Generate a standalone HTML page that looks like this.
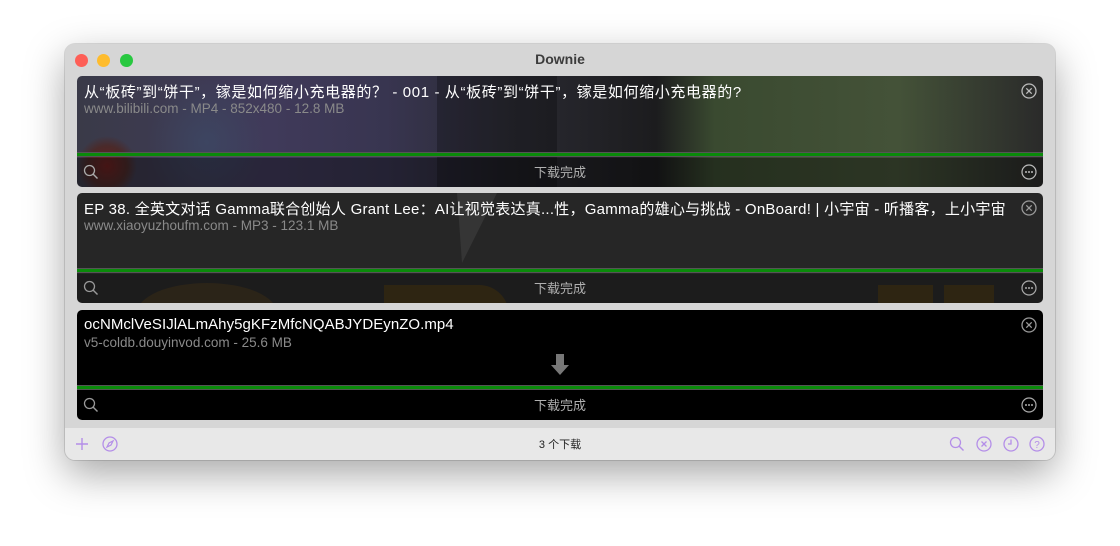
<!DOCTYPE html>
<html><head><meta charset="utf-8"><style>
*{margin:0;padding:0;box-sizing:border-box}
body{width:1120px;height:546px;background:#fff;font-family:"Liberation Sans","Noto Sans CJK SC",sans-serif;position:relative;overflow:hidden}
.win{position:absolute;left:65px;top:44px;width:990px;height:416px;background:#d6d6d6;border-radius:10px;box-shadow:0 14px 40px rgba(0,0,0,.35),0 0 0 1px rgba(0,0,0,.12);overflow:hidden}
.title{position:absolute;top:7px;left:0;right:0;text-align:center;font-weight:bold;font-size:14px;color:#3c3c3c}
.tl{position:absolute;top:10px;width:13px;height:13px;border-radius:50%}
.card{position:absolute;left:12px;width:966px;border-radius:5px;overflow:hidden;color:#fff}
.t1{position:absolute;left:7px;top:5px;font-size:15px;white-space:nowrap}
.t2{position:absolute;left:7px;top:25px;font-size:13.5px;color:#8a8a8a;white-space:nowrap}
.bar{position:absolute;left:0;right:0;height:5px;background:#0a8a0a;border-top:1px solid #555;border-bottom:1px solid #555}
.bot{position:absolute;left:0;right:0;height:29px;text-align:center;font-size:13px;color:#b0b0b0;line-height:29px}
.x{position:absolute;right:6px;top:7px}
.s{position:absolute;left:6px;top:6px}
.m{position:absolute;right:6px;top:6px}
.foot{position:absolute;left:0;right:0;top:384px;height:32px;background:#e8e8e8}
</style></head><body>
<div class="win">
<div class="tl" style="left:10px;background:#fe5f57"></div>
<div class="tl" style="left:32px;background:#febc2e"></div>
<div class="tl" style="left:55px;background:#28c840"></div>
<div class="title">Downie</div>

<div class="card" style="top:32px;height:111px;background:linear-gradient(90deg,#3a3a48 0%,#403a5a 20%,#383550 32%,#2a2a32 45%,#1c1c1e 60%,#3a4a30 66%,#445238 85%,#2a2a2a 100%)">
<div style="position:absolute;left:0;top:60px;width:60px;height:51px;background:radial-gradient(circle at 30px 30px,#6a2020 0,#4a2a2a 20px,transparent 30px)"></div>
<div style="position:absolute;left:70px;top:0;width:120px;height:111px;background:radial-gradient(ellipse at 50% 60%,rgba(60,80,110,.5),transparent 70%)"></div>
<div style="position:absolute;left:360px;top:0;width:120px;height:111px;background:rgba(0,0,0,.25)"></div>
<div class="t1" style="letter-spacing:.62px">从“板砖”到“饼干”，镓是如何缩小充电器的？ - 001 - 从“板砖”到“饼干”，镓是如何缩小充电器的?</div>
<div class="t2">www.bilibili.com - MP4 - 852x480 - 12.8 MB</div>
<svg class="x" width="16" height="16" viewBox="0 0 16 16"><circle cx="8" cy="8" r="7" fill="none" stroke="#bbb" stroke-width="1.3"/><path d="M5.3 5.3l5.4 5.4M10.7 5.3l-5.4 5.4" stroke="#bbb" stroke-width="1.3"/></svg>
<div class="bar" style="top:76px"></div>
<div class="bot" style="top:82px;background:rgba(0,0,0,.35)">下载完成
<svg class="s" width="16" height="16" viewBox="0 0 16 16"><circle cx="6.5" cy="6.5" r="5" fill="none" stroke="#aaa" stroke-width="1.3"/><path d="M10 10l4.5 4.5" stroke="#aaa" stroke-width="1.4"/></svg>
<svg class="m" width="16" height="16" viewBox="0 0 16 16"><circle cx="8" cy="8" r="7" fill="none" stroke="#bbb" stroke-width="1.2"/><circle cx="5" cy="8" r="1" fill="#bbb"/><circle cx="8" cy="8" r="1" fill="#bbb"/><circle cx="11" cy="8" r="1" fill="#bbb"/></svg></div>
</div>

<div class="card" style="top:149px;height:110px;background:#262626">
<div style="position:absolute;left:60px;top:90px;width:140px;height:60px;border-radius:50%;background:#3a3020"></div>
<div style="position:absolute;left:307px;top:92px;width:125px;height:30px;background:#3e3218;border-radius:0 40px 0 0"></div>
<div style="position:absolute;left:801px;top:92px;width:55px;height:20px;background:#3e3218"></div>
<div style="position:absolute;left:867px;top:92px;width:50px;height:20px;background:#3e3218"></div>
<svg style="position:absolute;left:360px;top:0" width="140" height="75" viewBox="0 0 140 75"><path d="M20 0 L60 0 L25 70 Z" fill="#444" opacity=".5"/></svg>
<div class="t1" style="letter-spacing:.25px">EP 38. 全英文对话 Gamma联合创始人 Grant Lee：AI让视觉表达真...性，Gamma的雄心与挑战 - OnBoard! | 小宇宙 - 听播客，上小宇宙</div>
<div class="t2">www.xiaoyuzhoufm.com - MP3 - 123.1 MB</div>
<svg class="x" width="16" height="16" viewBox="0 0 16 16"><circle cx="8" cy="8" r="7" fill="none" stroke="#999" stroke-width="1.3"/><path d="M5.3 5.3l5.4 5.4M10.7 5.3l-5.4 5.4" stroke="#999" stroke-width="1.3"/></svg>
<div class="bar" style="top:75px"></div>
<div class="bot" style="top:81px;background:rgba(0,0,0,.25)">下载完成
<svg class="s" width="16" height="16" viewBox="0 0 16 16"><circle cx="6.5" cy="6.5" r="5" fill="none" stroke="#999" stroke-width="1.3"/><path d="M10 10l4.5 4.5" stroke="#999" stroke-width="1.4"/></svg>
<svg class="m" width="16" height="16" viewBox="0 0 16 16"><circle cx="8" cy="8" r="7" fill="none" stroke="#aaa" stroke-width="1.2"/><circle cx="5" cy="8" r="1" fill="#aaa"/><circle cx="8" cy="8" r="1" fill="#aaa"/><circle cx="11" cy="8" r="1" fill="#aaa"/></svg></div>
</div>

<div class="card" style="top:266px;height:110px;background:#000">
<div class="t1" style="letter-spacing:.05px;top:6px">ocNMclVeSIJlALmAhy5gKFzMfcNQABJYDEynZO.mp4</div>
<div class="t2">v5-coldb.douyinvod.com - 25.6 MB</div>
<svg class="x" width="16" height="16" viewBox="0 0 16 16"><circle cx="8" cy="8" r="7" fill="none" stroke="#999" stroke-width="1.3"/><path d="M5.3 5.3l5.4 5.4M10.7 5.3l-5.4 5.4" stroke="#999" stroke-width="1.3"/></svg>
<svg style="position:absolute;left:473px;top:44px" width="20" height="22" viewBox="0 0 20 22"><path d="M6 0h8v11h5l-9 10-9-10h5z" fill="#777"/></svg>
<div class="bar" style="top:75px"></div>
<div class="bot" style="top:81px">下载完成
<svg class="s" width="16" height="16" viewBox="0 0 16 16"><circle cx="6.5" cy="6.5" r="5" fill="none" stroke="#999" stroke-width="1.3"/><path d="M10 10l4.5 4.5" stroke="#999" stroke-width="1.4"/></svg>
<svg class="m" width="16" height="16" viewBox="0 0 16 16"><circle cx="8" cy="8" r="7" fill="none" stroke="#aaa" stroke-width="1.2"/><circle cx="5" cy="8" r="1" fill="#aaa"/><circle cx="8" cy="8" r="1" fill="#aaa"/><circle cx="11" cy="8" r="1" fill="#aaa"/></svg></div>
</div>

<div class="foot">
<svg style="position:absolute;left:10px;top:9px" width="14" height="14" viewBox="0 0 14 14"><path d="M7 1v12M1 7h12" stroke="#b48ee8" stroke-width="1.4"/></svg>
<svg style="position:absolute;left:37px;top:8px" width="16" height="16" viewBox="0 0 16 16"><circle cx="8" cy="8" r="7" fill="none" stroke="#b48ee8" stroke-width="1.3"/><path d="M11 5L9 9 5 11 7 7z" fill="none" stroke="#b48ee8" stroke-width="1.2"/></svg>
<div style="position:absolute;left:0;right:0;top:8px;text-align:center;font-size:11px;color:#222">3 个下载</div>
<svg style="position:absolute;left:884px;top:8px" width="16" height="16" viewBox="0 0 16 16"><circle cx="6.5" cy="6.5" r="5" fill="none" stroke="#b48ee8" stroke-width="1.3"/><path d="M10 10l4.5 4.5" stroke="#b48ee8" stroke-width="1.4"/></svg>
<svg style="position:absolute;left:911px;top:8px" width="16" height="16" viewBox="0 0 16 16"><circle cx="8" cy="8" r="7" fill="none" stroke="#b48ee8" stroke-width="1.3"/><path d="M5.5 5.5l5 5M10.5 5.5l-5 5" stroke="#b48ee8" stroke-width="1.3"/></svg>
<svg style="position:absolute;left:938px;top:8px" width="16" height="16" viewBox="0 0 16 16"><circle cx="8" cy="8" r="7" fill="none" stroke="#b48ee8" stroke-width="1.3"/><path d="M8 3.5V8H5" fill="none" stroke="#b48ee8" stroke-width="1.3"/></svg>
<svg style="position:absolute;left:964px;top:8px" width="16" height="16" viewBox="0 0 16 16"><circle cx="8" cy="8" r="7" fill="none" stroke="#b48ee8" stroke-width="1.3"/><text x="8" y="12" font-size="10" text-anchor="middle" fill="#b48ee8" font-family="Liberation Sans">?</text></svg>
</div>
</div>
</body></html>
